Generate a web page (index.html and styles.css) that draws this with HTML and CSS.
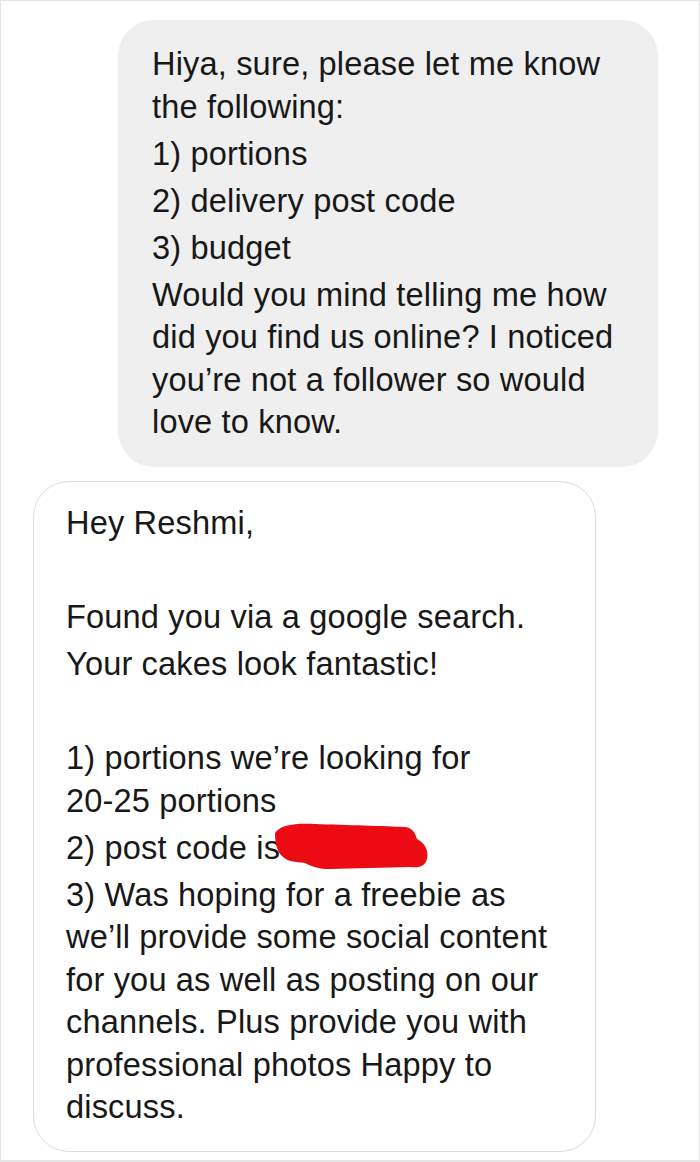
FILE: index.html
```html
<!DOCTYPE html>
<html>
<head>
<meta charset="utf-8">
<link rel="stylesheet" href="styles.css">
</head>
<body>
<div class="page">
  <div class="bubble bubble-in">
    <p>Hiya, sure, please let me know<br>the following:</p>
    <p>1) portions</p>
    <p>2) delivery post code</p>
    <p>3) budget</p>
    <p>Would you mind telling me how<br>did you find us online? I noticed<br>you’re not a follower so would<br>love to know.</p>
  </div>
  <div class="bubble bubble-out">
    <p>Hey Reshmi,</p>
    <p>&nbsp;</p>
    <p>Found you via a google search.</p>
    <p>Your cakes look fantastic!</p>
    <p>&nbsp;</p>
    <p>1) portions we’re looking for<br>20-25 portions</p>
    <p>2) post code is<span class="redact"><svg width="156" height="50" viewBox="0 0 156 50"><path d="M0,12 C5,4 20,2 40,3 C70,4 110,5 130,6 C138,7 140,12 142,18 C150,22 154,30 152,38 C150,45 145,47 135,46 C110,47 80,47 55,48 C45,48 38,46 30,42 C20,41 12,40 8,36 C3,32 0,24 0,12 Z" fill="#ec0a13"/></svg></span></p>
    <p>3) Was hoping for a freebie as<br>we’ll provide some social content<br>for you as well as posting on our<br>channels. Plus provide you with<br>professional photos Happy to<br>discuss.</p>
  </div>
</div>
</body>
</html>
```
FILE: styles.css
```css
* { box-sizing: border-box; }
html, body { margin: 0; padding: 0; background: #fff; }
.page {
  width: 700px;
  height: 1162px;
  border: 1px solid #e4e4e4;
  border-bottom: 2px solid #e4e4e4;
  padding-top: 19px;
  font-family: "Liberation Sans", Arial, sans-serif;
  font-size: 32.6px;
  letter-spacing: 0.15px;
  color: #181818;
  display: flex;
  flex-direction: column;
  gap: 14px;
}
.bubble p {
  margin: 0 0 4.5px 0;
  line-height: 42.5px;
  white-space: nowrap;
}
.bubble p:last-child { margin-bottom: 0; }
.bubble-in {
  margin-left: 117px;
  width: 540px;
  height: 447px;
  background: #efefef;
  border-radius: 36px;
  padding: 23px 20px 0 34px;
}
.bubble-out {
  margin-left: 32px;
  width: 563px;
  height: 671px;
  background: #fff;
  border: 1.5px solid #dcdcdc;
  border-radius: 36px;
  padding: 20px 20px 0 32px;
}
.redact {
  position: relative;
}
.redact svg {
  position: absolute;
  left: -5px;
  top: -8px;
}
```
